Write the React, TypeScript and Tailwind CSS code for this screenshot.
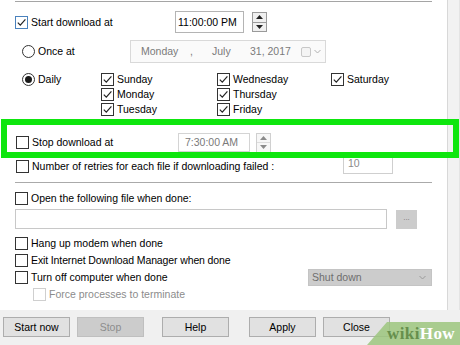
import React from "react";

type BoxProps = { checked?: boolean; disabled?: boolean; focus?: boolean };

const CheckBox = ({ checked, disabled, focus }: BoxProps) => (
  <span
    className={`flex h-[13px] w-[13px] shrink-0 items-center justify-center border bg-white ${
      disabled ? "border-[#cfcfcf]" : focus ? "border-[#4a82bd]" : "border-[#333333]"
    }`}
  >
    {checked && (
      <svg width="11" height="11" viewBox="0 0 11 11">
        <path d="M1.8 5.6 L4.3 8.2 L9.4 2.4" fill="none" stroke="#222" strokeWidth="1.2" />
      </svg>
    )}
  </span>
);

const Radio = ({ checked }: { checked?: boolean }) => (
  <span className="flex h-[13px] w-[13px] shrink-0 items-center justify-center rounded-full border border-[#333333] bg-white">
    {checked && <span className="h-[7px] w-[7px] rounded-full bg-[#1a1a1a]" />}
  </span>
);

const Check = ({
  label,
  checked,
  disabled,
  focus,
}: BoxProps & { label: string }) => (
  <div className="flex items-center gap-[3px]">
    <CheckBox checked={checked} disabled={disabled} focus={focus} />
    <span className={disabled ? "text-[#8c8c8c]" : "text-black"}>{label}</span>
  </div>
);

const Spinner = ({ disabled }: { disabled?: boolean }) => {
  const fill = disabled ? "#8a8a8a" : "#222";
  return (
    <div
      className={`flex h-[20px] w-[15px] flex-col border ${
        disabled ? "border-[#d0d0d0] bg-[#f7f7f7]" : "border-[#9a9a9a] bg-[#f0f0f0]"
      }`}
    >
      <div
        className={`flex flex-1 items-center justify-center border-b ${
          disabled ? "border-[#dddddd]" : "border-[#9a9a9a]"
        }`}
      >
        <svg width="7" height="4" viewBox="0 0 7 4">
          <path d="M0 4 L3.5 0 L7 4 Z" fill={fill} />
        </svg>
      </div>
      <div className="flex flex-1 items-center justify-center">
        <svg width="7" height="4" viewBox="0 0 7 4">
          <path d="M0 0 L3.5 4 L7 0 Z" fill={fill} />
        </svg>
      </div>
    </div>
  );
};

const Chevron = ({ color }: { color: string }) => (
  <svg width="7" height="5" viewBox="0 0 7 5">
    <path d="M0.5 1 L3.5 4 L6.5 1" fill="none" stroke={color} strokeWidth="1" />
  </svg>
);

const Button = ({ label, disabled, className }: { label: string; disabled?: boolean; className: string }) => (
  <div
    className={`flex h-[20px] w-[67px] items-center justify-center border ${
      disabled ? "border-[#bfbfbf] bg-[#cccccc] text-[#8c8c8c]" : "border-[#adadad] bg-[#e1e1e1] text-black"
    } ${className}`}
  >
    {label}
  </div>
);

export default function App() {
  return (
    <div className="relative flex h-[345px] w-[460px] flex-col overflow-hidden bg-[#f0f0f0] font-['Liberation_Sans',Arial,sans-serif] text-[10.5px] leading-none text-black">
      <div className="flex h-[310px]">
        <div className="flex w-[448px] flex-col border-r border-[#d8d8d8] bg-white px-[15px]">
          <div className="mt-[1px] h-[2px] border-t border-[#a5a5a5]" />

          {/* start download */}
          <div className="mt-[8px] flex h-[22px] items-center">
            <div className="w-[160px]">
              <Check label="Start download at" checked focus />
            </div>
            <div className="flex h-[22px] w-[69px] items-center border border-[#b4b4b4] pl-[2px]">11:00:00 PM</div>
            <div className="ml-[8px]">
              <Spinner />
            </div>
          </div>

          {/* once at */}
          <div className="mt-[7px] flex h-[23px] items-center">
            <div className="ml-[7px] flex w-[108px] items-center gap-[3px]">
              <Radio />
              <span>Once at</span>
            </div>
            <div className="flex h-[23px] w-[196px] items-center border border-[#d9d9d9] bg-[#fafafa] pl-[10px] text-[#7a7a7a]">
              <span className="w-[49px]">Monday</span>
              <span className="w-[22px]">,</span>
              <span className="w-[38px]">July</span>
              <span className="w-[51px]">31, 2017</span>
              <span className="h-[10px] w-[10px] rounded-[2px] border border-[#c8c8c8] bg-[#f4f4f4]" />
              <span className="ml-[3px] flex">
                <Chevron color="#b0b0b0" />
              </span>
            </div>
          </div>

          {/* daily */}
          <div className="mt-[9px] grid grid-cols-[86px_116px_114px_1fr] grid-rows-[15px_15px_15px] items-center">
            <div className="ml-[7px] flex items-center gap-[3px]">
              <Radio checked />
              <span>Daily</span>
            </div>
            <Check label="Sunday" checked />
            <Check label="Wednesday" checked />
            <Check label="Saturday" checked />
            <div />
            <Check label="Monday" checked />
            <Check label="Thursday" checked />
            <div />
            <div />
            <Check label="Tuesday" checked />
            <Check label="Friday" checked />
            <div />
          </div>

          {/* stop download */}
          <div className="mt-[16px] flex h-[19px] items-center">
            <div className="ml-[1px] w-[162px]">
              <Check label="Stop download at" />
            </div>
            <div className="flex h-[19px] w-[72px] items-center border border-[#d4d4d4] pl-[6px] text-[#7a7a7a]">7:30:00 AM</div>
            <div className="ml-[6px]">
              <Spinner disabled />
            </div>
          </div>

          {/* retries */}
          <div className="mt-[2px] flex h-[20px]">
            <div className="mb-[1px] ml-[1px] flex w-[327px] self-end">
              <Check label="Number of retries for each file if downloading failed :" />
            </div>
            <div className="h-[20px] w-[50px] border border-[#cfcfcf] pl-[4px] pt-[3px] text-[#8a8a8a]">10</div>
          </div>

          <div className="mt-[8px] h-px bg-[#aaaaaa]" />

          {/* open file */}
          <div className="mt-[8px] flex h-[14px] items-center">
            <Check label="Open the following file when done:" />
          </div>
          <div className="mt-[4px] flex h-[20px] items-center">
            <div className="h-[20px] w-[372px] border border-[#c8c8c8] bg-white" />
            <div className="ml-[9px] flex h-[19px] w-[21px] items-center justify-center bg-[#cccccc] pb-[3px] text-[8px] text-[#777777]">
              ...
            </div>
          </div>

          {/* finishing options */}
          <div className="mt-[6px] flex h-[17px] items-center">
            <Check label="Hang up modem when done" />
          </div>
          <div className="flex h-[17px] items-center tracking-[-0.12px]">
            <Check label="Exit Internet Download Manager when done" />
          </div>
          <div className="flex h-[17px] items-center">
            <Check label="Turn off computer when done" />
            <div className="ml-auto flex h-[17px] w-[124px] items-center justify-between border border-[#c4c4c4] bg-[#cccccc] pl-[3px] pr-[5px] text-[#6e6e6e]">
              <span>Shut down</span>
              <Chevron color="#9a9a9a" />
            </div>
          </div>
          <div className="ml-[18px] flex h-[17px] items-center">
            <Check label="Force processes to terminate" disabled />
          </div>
        </div>
        <div className="flex-1 border-r border-[#e4e4e4] bg-[#f2f2f2]" />
      </div>

      {/* buttons */}
      <div className="mt-[7px] flex pl-[3px]">
        <Button label="Start now" className="" />
        <Button label="Stop" disabled className="ml-[7px]" />
        <Button label="Help" className="ml-[18px]" />
        <Button label="Apply" className="ml-[20px]" />
        <Button label="Close" className="ml-[7px]" />
      </div>

      {/* highlight annotation */}
      <div className="pointer-events-none absolute left-[1px] top-[119px] h-[39px] w-[458px] border-[6px] border-[#0ee60e]" />

      {/* watermark */}
      <div className="pointer-events-none absolute bottom-0 right-0 h-[23px] w-[93px]">
        <svg className="absolute inset-0" width="93" height="23" viewBox="0 0 93 23">
          <path d="M0 23 L20 0 L93 0 L93 23 Z" fill="#9cc57e" fillOpacity="0.85" />
        </svg>
        <div className="absolute bottom-[3px] left-[20px] flex font-['Liberation_Serif',serif] text-[17px] font-bold tracking-[0.4px]">
          <span className="text-[#668f4c]">wiki</span>
          <span className="text-white">How</span>
        </div>
      </div>
    </div>
  );
}
